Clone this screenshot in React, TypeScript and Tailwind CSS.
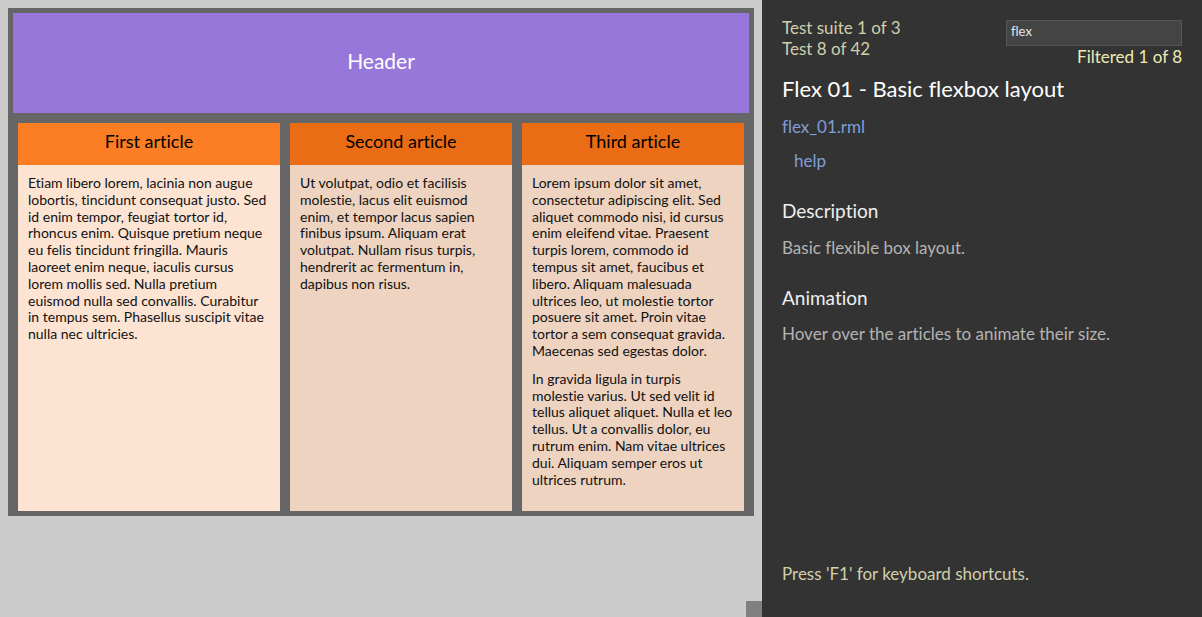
const articles = [
  {
    title: 'First article',
    active: true,
    paragraphs: [
      'Etiam libero lorem, lacinia non augue lobortis, tincidunt consequat justo. Sed id enim tempor, feugiat tortor id, rhoncus enim. Quisque pretium neque eu felis tincidunt fringilla. Mauris laoreet enim neque, iaculis cursus lorem mollis sed. Nulla pretium euismod nulla sed convallis. Curabitur in tempus sem. Phasellus suscipit vitae nulla nec ultricies.',
    ],
  },
  {
    title: 'Second article',
    active: false,
    paragraphs: [
      'Ut volutpat, odio et facilisis molestie, lacus elit euismod enim, et tempor lacus sapien finibus ipsum. Aliquam erat volutpat. Nullam risus turpis, hendrerit ac fermentum in, dapibus non risus.',
    ],
  },
  {
    title: 'Third article',
    active: false,
    paragraphs: [
      'Lorem ipsum dolor sit amet, consectetur adipiscing elit. Sed aliquet commodo nisi, id cursus enim eleifend vitae. Praesent turpis lorem, commodo id tempus sit amet, faucibus et libero. Aliquam malesuada ultrices leo, ut molestie tortor posuere sit amet. Proin vitae tortor a sem consequat gravida. Maecenas sed egestas dolor.',
      'In gravida ligula in turpis molestie varius. Ut sed velit id tellus aliquet aliquet. Nulla et leo tellus. Ut a convallis dolor, eu rutrum enim. Nam vitae ultrices dui. Aliquam semper eros ut ultrices rutrum.',
    ],
  },
];

export default function App() {
  return (
    <div className="flex h-[617px] w-full overflow-hidden font-['Lato',sans-serif] [font-variant-ligatures:none]">
      {/* document area */}
      <div className="relative flex-1 bg-[#cccccc] p-2">
        <div className="flex h-[508px] w-[746px] flex-col bg-[#666666] p-[5px]">
          <div className="flex h-[100px] items-center justify-center bg-[#9777d9] pb-[4px] text-[21px] text-white">
            Header
          </div>
          <div className="mx-[5px] mt-[10px] flex flex-1 gap-[10px]">
            {articles.map((a) => (
              <div
                key={a.title}
                className={`flex flex-col ${a.active ? 'w-[262px] bg-[#fde3d1]' : 'w-[222px] bg-[#edd3c0]'}`}
              >
                <div
                  className={`h-[42px] pt-[7px] text-center text-[18px] leading-[22px] text-black ${a.active ? 'bg-[#fb7d24]' : 'bg-[#ea6c14]'}`}
                >
                  {a.title}
                </div>
                <div className="p-[10px] text-[14px] leading-[16.8px] text-[#111111]">
                  {a.paragraphs.map((p, i) => (
                    <p key={i} className="mb-[11px]">
                      {p}
                    </p>
                  ))}
                </div>
              </div>
            ))}
          </div>
        </div>
        <div className="absolute bottom-0 right-0 h-4 w-4 bg-[#808080]" />
      </div>

      {/* test panel */}
      <div className="flex w-[440px] flex-col bg-[#333333] px-5 pb-[33px] pt-[17px] text-[17px] leading-[21px]">
        <div className="flex justify-between">
          <div className="text-[#cfcfab]">
            <div>Test suite 1 of 3</div>
            <div>Test 8 of 42</div>
          </div>
          <div className="mt-[3px] flex w-[176px] flex-col items-end">
            <div className="h-[26px] w-full border border-[#555555] bg-[#444444] px-[4px] pt-[1px] text-[13px] leading-[18px] text-[#e8e8e8]">
              flex
            </div>
            <div className="text-[#ececb4]">Filtered 1 of 8</div>
          </div>
        </div>
        <div className="mt-[9px] text-[22px] leading-[26px] text-white">Flex 01 - Basic flexbox layout</div>
        <div className="mt-[14px] text-[#819ed8]">flex_01.rml</div>
        <div className="ml-3 mt-[13px] text-[#819ed8]">help</div>
        <div className="mt-[28px] text-[19px] leading-[24px] text-[#eeeeee]">Description</div>
        <div className="mt-[14px] text-[#b4b4b4]">Basic flexible box layout.</div>
        <div className="mt-[28px] text-[19px] leading-[24px] text-[#eeeeee]">Animation</div>
        <div className="mt-[13px] text-[#b4b4b4]">Hover over the articles to animate their size.</div>
        <div className="mt-auto text-[#cfcfab]">Press 'F1' for keyboard shortcuts.</div>
      </div>
    </div>
  );
}
